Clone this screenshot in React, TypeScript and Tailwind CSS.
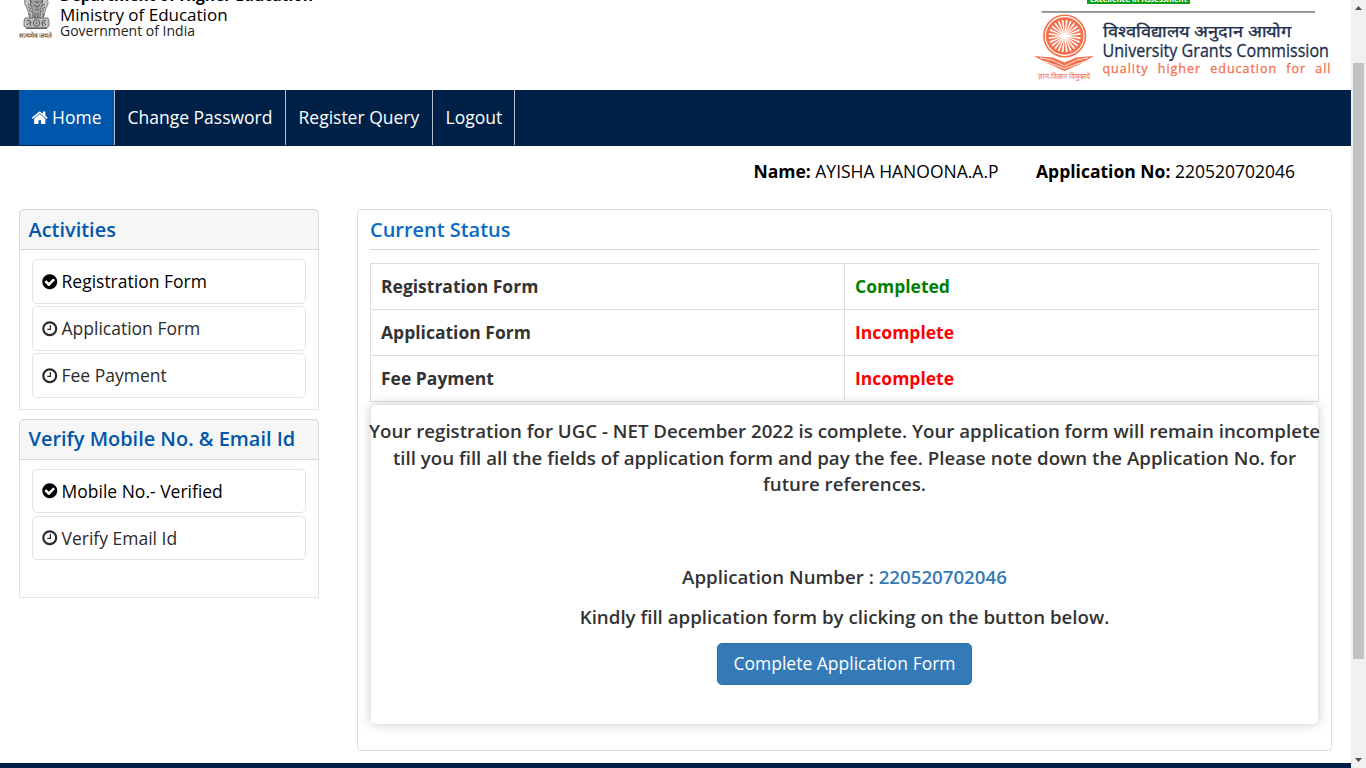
import React from "react";

const CHECK =
  "M1412 734q0-28-18-46l-91-90q-19-19-45-19t-45 19l-408 407-226-226q-19-19-45-19t-45 19l-91 90q-18 18-18 46 0 27 18 45l362 362q19 19 45 19 27 0 46-19l543-543q18-18 18-45zm252 162q0 209-103 385.5t-279.5 279.5-385.5 103-385.5-103-279.5-279.5-103-385.5 103-385.5 279.5-279.5 385.5-103 385.5 103 279.5 279.5 103 385.5z";
const CLOCK =
  "M1024 544v448q0 14-9 23t-23 9h-320q-14 0-23-9t-9-23v-64q0-14 9-23t23-9h224v-352q0-14 9-23t23-9h64q14 0 23 9t9 23zm416 352q0-148-73-273t-198-198-273-73-273 73-198 198-73 273 73 273 198 198 273 73 273-73 198-198 73-273zm224 0q0 209-103 385.5t-279.5 279.5-385.5 103-385.5-103-279.5-279.5-103-385.5 103-385.5 279.5-279.5 385.5-103 385.5 103 279.5 279.5 103 385.5z";
const HOME =
  "M1472 992v480q0 26-19 45t-45 19h-384v-384h-256v384h-384q-26 0-45-19t-19-45v-480q0-1 .5-3t.5-3l575-474 575 474q1 2 1 6zm223-69l-62 74q-8 9-21 11h-3q-13 0-21-7l-692-577-692 577q-12 8-24 7-13-2-21-11l-62-74q-8-10-7-23.5t11-21.5l719-599q32-26 76-26t76 26l244 204v-195q0-14 9-23t23-9h192q14 0 23 9t9 23v408l219 182q10 8 11 21.5t-7 23.5z";

function Emblem() {
  return (
    <svg className="block h-[42px] w-[36px] shrink-0" viewBox="0 0 36 42">
      <g stroke="#666" fill="#c4c4c4" strokeWidth="0.8">
        <path d="M8.500 -3C6 0 6 4 8.500 7L10 11L11.500 18H25.500L27 11L28.500 7C31 4 30 0 28 -3Z" />
        <path d="M14 -2C12 1 12 5 14 8L15 18H22L23 8C25 5 25 1 23 -2Z" fill="#a0a0a0" />
        <path d="M10 4l3 2M10 7l3 2M11 10l3 2M27 4l-3 2M27 7l-3 2M26 10l-3 2M17 1l2 2 2-2M16 5l3 2 3-2M17 9l2 1 2-1M17 13v5M20 13v5M12 0l2 3M25 0l-2 3M12 13v4M25 13v4" fill="none" stroke="#444" />
        <path d="M7 18H30L31 21V26L28 28.500H9L6 26V21Z" fill="#bdbdbd" />
        <circle cx="18.500" cy="23" r="3.300" fill="#ddd" stroke="#333" />
        <path d="M18.500 20v6M15.500 23h6M16.400 21l4.200 4M20.600 21l-4.200 4" strokeWidth="0.600" />
        <path d="M9 21q3-2 4 1l-1 4M9 25l3-3M28 21q-3-2-4 1l1 4M28 25l-3-3M8 28H29" fill="none" stroke="#333" />
      </g>
      <text x="1" y="37.800" fontSize="7" fontWeight="500" fill="#222" textLength="33" lengthAdjust="spacingAndGlyphs">सत्यमेव जयते</text>
    </svg>
  );
}

function UgcLogo() {
  const spokes = Array.from({ length: 24 }, (_, i) => i * 15);
  return (
    <svg className="block h-[90px] w-[317px]" viewBox="1020 0 317 90">
      <rect x="1087" y="-14" width="103" height="18" fill="#0fa015" />
      <text x="1090" y="1.700" fontSize="9.500" fontWeight="700" fill="#fff" textLength="97" lengthAdjust="spacingAndGlyphs">Excellence in Assessment</text>
      <rect x="1041.500" y="11" width="273.500" height="1.800" fill="#8f8f8f" />
      <circle cx="1064.700" cy="36" r="20.700" fill="none" stroke="#f5704a" strokeWidth="1.600" />
      <circle cx="1064.700" cy="36" r="18.800" fill="#f5704a" />
      {spokes.map((a) => (
        <path key={a} d="M1064.700 35.600L1080.700 35.100V36.900L1064.700 36.400Z" fill="#fff" transform={`rotate(${a + 7.5} 1064.7 36)`} />
      ))}
      <circle cx="1064.700" cy="36" r="3" fill="#fff" />
      <path d="M1034 56L1053 57.500L1064.500 62.500L1076 57.500L1094 56L1080 64L1064.500 71L1049 64Z" fill="#f5704a" />
      <path d="M1040 57.800L1052 60L1064.500 66L1077 60L1088 57.800M1045 61.500L1064.500 68.500L1084 61.500" fill="none" stroke="#fff" strokeWidth="0.800" />
      <text x="1038" y="79" fontSize="7.500" fontWeight="500" fill="#f5704a" textLength="52" lengthAdjust="spacingAndGlyphs">ज्ञान-विज्ञान विमुक्तये</text>
      <text x="1103" y="37.300" fontSize="16" fontWeight="500" fill="#20304d" stroke="#20304d" strokeWidth="0.300" textLength="188" lengthAdjust="spacingAndGlyphs">विश्वविद्यालय अनुदान आयोग</text>
      <text x="1102.500" y="57" fontSize="18" fontWeight="500" fill="#20304d" stroke="#20304d" strokeWidth="0.300" textLength="226.500" lengthAdjust="spacingAndGlyphs">University Grants Commission</text>
      <text x="1102.500" y="73" fontSize="12.500" fontWeight="500" fill="#f47350" stroke="#f47350" strokeWidth="0.300" wordSpacing="5" textLength="228" lengthAdjust="spacing">quality higher education for all</text>
    </svg>
  );
}

function Glyph({ d }: { d: string }) {
  return (
    <svg className="block size-[17.5px] shrink-0" viewBox="0 0 1792 1792" fill="currentColor">
      <path d={d} />
    </svg>
  );
}

function Item({ done, label, h }: { done?: boolean; label: string; h: string }) {
  return (
    <div className={`flex items-center gap-[3px] rounded-[5px] border border-[#e3e3e3] pl-[8px] ${h} ${done ? "text-black" : "text-[#2b2b2b]"}`}>
      <Glyph d={done ? CHECK : CLOCK} />
      <span>{label}</span>
    </div>
  );
}

function Panel({ title, className, titleClass, children }: { title: string; className: string; titleClass: string; children: React.ReactNode }) {
  return (
    <section className={`flex flex-col rounded-t-[5px] border border-[#e3e3e3] ${className}`}>
      <h2 className={`-mx-px -mt-px flex h-[41px] shrink-0 items-center rounded-t-[5px] border border-[#d8d8d8] bg-[#f6f6f6] pl-[8.5px] text-[19.95px] font-semibold text-[#0056a9] ${titleClass}`}>
        {title}
      </h2>
      <div className="flex flex-col gap-[2px] px-[12px] pt-[9px]">{children}</div>
    </section>
  );
}

function Row({ label, value, ok }: { label: string; value: string; ok?: boolean }) {
  return (
    <div className="grid h-[46px] grid-cols-[473px_1fr] border-b border-[#ddd] leading-[45px]">
      <div className="pl-[10px]">{label}</div>
      <div className={`border-l border-[#ddd] pl-[10px] ${ok ? "text-[#008000]" : "text-[#f00]"}`}>{value}</div>
    </div>
  );
}

export default function App() {
  return (
    <div className="flex h-[768px] w-[1366px] overflow-hidden bg-white font-['Open_Sans',sans-serif] text-[17.5px] leading-[25px] text-[#333]">
      <div className="flex w-[1351px] flex-col overflow-hidden">
        <header className="flex h-[90px] shrink-0 justify-between overflow-hidden pr-[14px] pl-[18px]">
          <div className="flex gap-[6px]">
            <Emblem />
            <div className="-mt-[15px] flex flex-col whitespace-nowrap text-black">
              <span className="text-[15.6px] leading-[21px] font-bold">Department of Higher Education</span>
              <span className="text-[17px] leading-[17px]">Ministry of Education</span>
              <span className="text-[14px] leading-[15px] text-[#222]">Government of India</span>
            </div>
          </div>
          <UgcLogo />
        </header>

        <nav className="flex h-[56px] shrink-0 bg-[#002147] pb-px pl-[19px] text-white">
          <a className="flex w-[96px] items-center gap-[3.5px] border-r border-[#b5bdc8] bg-[#0056ab] pl-[12px]">
            <Glyph d={HOME} />
            Home
          </a>
          <a className="flex w-[171px] items-center border-r border-[#b5bdc8] pl-[12.5px]">Change Password</a>
          <a className="flex w-[147px] items-center border-r border-[#b5bdc8] pl-[12.5px]">Register Query</a>
          <a className="flex w-[82px] items-center border-r border-[#b5bdc8] pl-[12.5px]">Logout</a>
        </nav>

        <div className="flex h-[63px] shrink-0 justify-end gap-[37.5px] pt-[13px] pr-[56px] text-black">
          <span><b>Name:</b> AYISHA HANOONA.A.P</span>
          <span><b>Application No:</b> 220520702046</span>
        </div>

        <div className="flex h-[554px] shrink-0 gap-[38px] pl-[19px]">
          <aside className="flex w-[300px] flex-col gap-[9px]">
            <Panel title="Activities" className="h-[201px]" titleClass="">
              <Item done label="Registration Form" h="h-[45px]" />
              <Item label="Application Form" h="h-[45px]" />
              <Item label="Fee Payment" h="h-[45px]" />
            </Panel>
            <Panel title="Verify Mobile No. & Email Id" className="h-[179px]" titleClass="pb-[2px]">
              <Item done label="Mobile No.- Verified" h="h-[44px] mb-px" />
              <Item label="Verify Email Id" h="h-[44px]" />
            </Panel>
          </aside>

          <main className="flex h-[542px] w-[975px] flex-col rounded-[4px] border border-[#ddd] px-[12px]">
            <h2 className="h-[40px] shrink-0 border-b border-[#d5d5d5] text-[19.95px] leading-[40px] font-semibold text-[#0a6bc6]">Current Status</h2>
            <div className="mt-[13px] shrink-0 border border-b-0 border-[#ddd] font-bold">
              <Row label="Registration Form" value="Completed" ok />
              <Row label="Application Form" value="Incomplete" />
              <Row label="Fee Payment" value="Incomplete" />
            </div>
            <div className="mx-px mt-[3px] flex h-[319px] shrink-0 flex-col items-center rounded-[5px] bg-white pt-[13px] text-center text-[18.7px] font-semibold shadow-[0_0_12px_rgba(0,0,0,0.22)]">
              <p className="-mx-[10px] leading-[26.5px] whitespace-nowrap">
                Your registration for UGC - NET December 2022 is complete. Your application form will remain incomplete
                <br />
                till you fill all the fields of application form and pay the fee. Please note down the Application No. for
                <br />
                future references.
              </p>
              <p className="mt-[66px] leading-[26px]">
                Application Number : <span className="text-[#337ab7]">220520702046</span>
              </p>
              <p className="mt-[14px] leading-[26px]">Kindly fill application form by clicking on the button below.</p>
              <button className="mt-[13px] h-[42px] w-[255px] rounded-[5px] border border-[#2e6da4] bg-[#337ab7] text-[17.5px] font-normal text-white">
                Complete Application Form
              </button>
            </div>
          </main>
        </div>
        <footer className="h-[5px] shrink-0 bg-[#002147]" />
      </div>

      <div className="flex w-[15px] flex-col items-center bg-[#f1f1f1]">
        <svg className="block h-[63px] w-[15px]" viewBox="0 0 15 63"><path d="M4 10L7.500 6L11 10Z" fill="#505050" /></svg>
        <div className="h-[596px] w-[11px] bg-[#c1c1c1]" />
        <svg className="mt-auto block h-[15px] w-[15px]" viewBox="0 0 15 15"><path d="M4 5L7.500 9L11 5Z" fill="#505050" /></svg>
      </div>
    </div>
  );
}
